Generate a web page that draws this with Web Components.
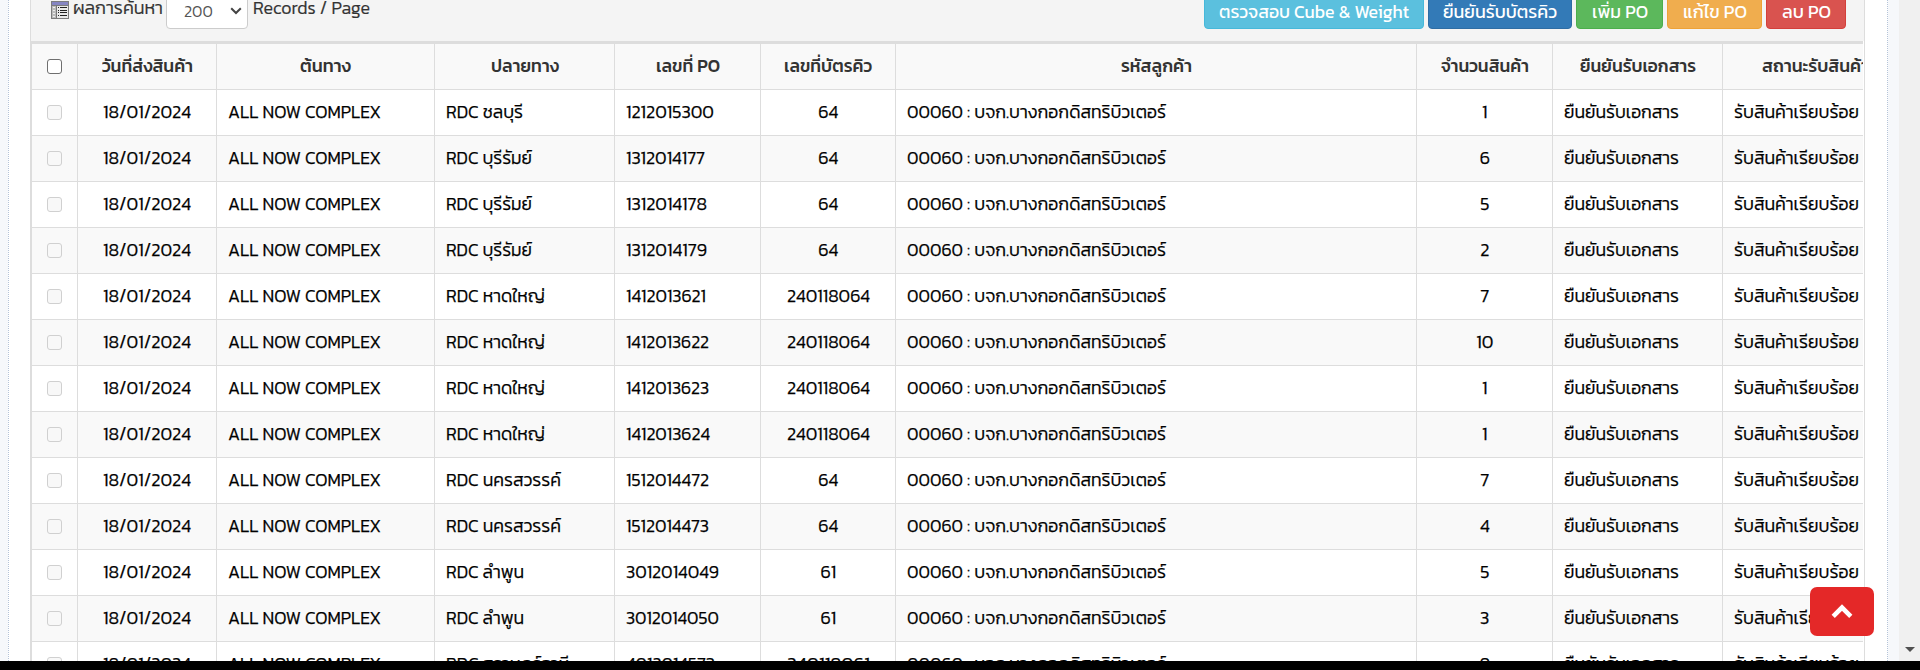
<!DOCTYPE html>
<html lang="th"><head><meta charset="utf-8"><title>PO</title>
<style>
html,body{margin:0;height:100%;overflow:hidden;background:#000}
body{font-family:Kanit,"Noto Sans Thai","Noto Sans",sans-serif;font-weight:300;color:#333}
</style></head><body>
<po-page></po-page>
<script>
const define=(name,html,init)=>{
  const t=document.createElement('template');t.innerHTML=html;
  customElements.define(name,class extends HTMLElement{
    connectedCallback(){
      if(this.shadowRoot)return;
      this.attachShadow({mode:'open'}).append(t.content.cloneNode(true));
      if(init)init(this,this.shadowRoot);
    }
  });
};

/* A single line of text, condensed or widened when a width is given. */
define('fit-text',`<style>
:host{display:inline-block;white-space:nowrap;text-align:left;line-height:24px;height:24px;vertical-align:top}
span{display:inline-block;transform-origin:0 50%;line-height:24px;height:24px}
</style><span><slot></slot></span>`,(el,r)=>{
  const w=+el.getAttribute('w'),s=r.querySelector('span');
  if(!w)return;
  const n=s.getBoundingClientRect().width;
  el.style.width=w+'px';
  if(n)s.style.transform='scaleX('+(w/n)+')';
});

define('check-box',`<style>
:host{display:block;box-sizing:border-box;width:15px;height:15px;border:1px solid #6f6f6f;border-radius:3px;background:#fff}
:host([disabled]){border-color:#d0d0d0;background:#f8f8f8}
</style>`);

define('tool-button',`<style>
:host{display:flex;box-sizing:border-box;height:38px;border:1px solid var(--edge);background:var(--fill);border-radius:4px;color:#fff;justify-content:center;font-size:18px;font-weight:400;padding-top:8px}
</style><slot></slot>`);

define('list-icon',`<style>:host{display:block;width:18px;height:18px}svg{display:block}</style>
<svg width="18" height="18" viewBox="0 0 18 18" shape-rendering="crispEdges">
<path fill="#7c7c7c" d="M0 0h18v18H0z"/><path fill="#e9e9e9" d="M1 5h16v12H1z"/>
<path fill="#8585c2" d="M1 1h16v3H1z"/><path fill="#bbb" d="M1 5h4v12H1z"/><path fill="#777" d="M5 4h1v13H5z"/>
<path fill="#eee" d="M2 6h2v1H2zM2 9h2v1H2zM2 12h2v1H2zM2 15h2v1H2z"/>
<path fill="#222" d="M7 6h1v1H7zM9 6h7v1H9zM7 9h1v1H7zM9 9h7v1H9zM7 11h1v1H7zM9 11h7v1H9zM7 14h1v1H7zM9 14h7v1H9z"/></svg>`);

define('page-size',`<style>
:host{display:flex;box-sizing:border-box;width:82px;height:38px;border:1px solid #ccc;border-radius:4px;background:#fff;color:#555;font-size:16px;padding:7px 5px 0 17px;justify-content:space-between}
svg{display:block;margin-top:8px}
</style><fit-text>200</fit-text><svg width="12" height="8" viewBox="0 0 12 8"><path d="M1.2 1.2 6 6l4.800-4.800" fill="none" stroke="#444" stroke-width="2"/></svg>`);

define('result-bar',`<style>
:host{display:flex;height:41px;background:#f4f4f4;box-sizing:border-box;font-size:18px;overflow:hidden;-webkit-text-stroke:.2px}
.l{display:flex;margin-left:20px}
.l list-icon{margin:1px 4px 0 0}.l fit-text{margin-top:-4px}
page-size{margin:-9px 5px 0 3px;-webkit-text-stroke:0}
.r{display:flex;gap:4px;margin:-9px 18px 0 auto;-webkit-text-stroke:0}
</style><div class="l"><list-icon></list-icon><fit-text w="90">ผลการค้นหา</fit-text><page-size></page-size><fit-text w="117">Records / Page</fit-text></div>
<div class="r">
<tool-button style="width:220px;--fill:#5bc0de;--edge:#46b8da"><fit-text w="190">ตรวจสอบ Cube &amp; Weight</fit-text></tool-button>
<tool-button style="width:144px;--fill:#337ab7;--edge:#2e6da4"><fit-text w="114">ยืนยันรับบัตรคิว</fit-text></tool-button>
<tool-button style="width:87px;--fill:#5cb85c;--edge:#4cae4c"><fit-text w="56">เพิ่ม PO</fit-text></tool-button>
<tool-button style="width:95px;--fill:#f0ad4e;--edge:#eea236"><fit-text w="64">แก้ไข PO</fit-text></tool-button>
<tool-button style="width:80px;--fill:#d9534f;--edge:#d43f3a"><fit-text w="49">ลบ PO</fit-text></tool-button></div>`);

define('table-row',`<style>
:host{display:grid;grid-template-columns:46px 139px 218px 180px 146px 135px 521px 136px 170px 185px;height:46px;box-sizing:border-box;border-bottom:1px solid #ddd;background:var(--row,#fff);color:#000;font-size:18px;-webkit-text-stroke:.25px}
:host([head]){color:#333;font-weight:500;background:#f9f9f9;-webkit-text-stroke:0}
::slotted(*){box-sizing:border-box;border-right:1px solid #ddd;padding:10px 10px 0 10.5px;min-width:0}
::slotted(.c){display:flex;justify-content:center}
::slotted(.k){padding:15px 0 0 15px}
</style><slot></slot>`);

define('po-table',`<style>
:host{display:block;width:1832px;overflow:hidden;border:solid #ddd;border-width:3px 0 0 1px;background:#fff;box-sizing:border-box}
.w{width:1876px}
</style><div class="w"></div>`,(el,r)=>{
  const f=(t,w,c='')=>`<div class="${c}"><fit-text ${w?`w="${w+1}"`:''}>${t}</fit-text></div>`;
  const heads=[['วันที่ส่งสินค้า',90],['ต้นทาง',50],['ปลายทาง',67],['เลขที่ PO',63],['เลขที่บัตรคิว',87],['รหัสลูกค้า',70],['จำนวนสินค้า',87],['ยืนยันรับเอกสาร',115],['สถานะรับสินค้า',106]];
  const rows=[['ชลบุรี',76,'1212015300',87,'64','1'],['บุรีรัมย์',85,'1312014177',78,'64','6'],['บุรีรัมย์',85,'1312014178',80,'64','5'],['บุรีรัมย์',85,'1312014179',80,'64','2'],
  ['หาดใหญ่',98,'1412013621',79,'240118064','7'],['หาดใหญ่',98,'1412013622',82,'240118064','10'],['หาดใหญ่',98,'1412013623',82,'240118064','1'],['หาดใหญ่',98,'1412013624',83,'240118064','1'],
  ['นครสวรรค์',114,'1512014472',82,'64','7'],['นครสวรรค์',114,'1512014473',82,'64','4'],['ลำพูน',77,'3012014049',92,'61','5'],['ลำพูน',77,'3012014050',92,'61','3'],['สุราษฎร์ธานี',122,'4012014573',88,'240118061','9']];
  r.querySelector('.w').innerHTML='<table-row head><div class="k"><check-box></check-box></div>'+heads.map(h=>f(...h,'c')).join('')+'</table-row>'+
  rows.map((d,i)=>`<table-row style="--row:${i%2?'#f9f9f9':'#fff'}"><div class="k"><check-box disabled></check-box></div>`+
   f('18/01/2024',87,'c')+f('ALL NOW COMPLEX',152)+f('RDC '+d[0],d[1])+f(d[2],d[3])+f(d[4],d[4].length>2?82:0,'c')+
   f('00060 : บจก.บางกอกดิสทริบิวเตอร์',258)+f(d[5],0,'c')+f('ยืนยันรับเอกสาร',114)+f('รับสินค้าเรียบร้อย',124)+'</table-row>').join('');
});

define('scroll-rail',`<style>
:host{display:flex;flex-direction:column;justify-content:flex-end;align-items:center;width:21px;background:#f0f0f0;box-sizing:border-box;padding-bottom:9px}
i{border:5px solid transparent;border-top-color:#505050;border-bottom:0}
</style><i></i>`);

define('to-top',`<style>
:host{position:absolute;left:1810px;top:587px;width:64px;height:49px;border-radius:7px;background:#e42828;display:flex;align-items:center;justify-content:center}
</style><svg width="22" height="15" viewBox="0 0 22 15"><path d="M2.200 12.300 11 3.600l8.800 8.700" fill="none" stroke="#fff" stroke-width="4.600"/></svg>`);

define('po-page',`<style>
:host{display:flex;position:relative;width:1920px;height:661px;overflow:hidden;background:#f6f8fb}
main{flex:1;margin:0 11px 0 8px;box-sizing:border-box;border:dotted #b4c3d8;border-width:0 1px;background:#fff;padding:0 22px 0 21px}
section{box-sizing:border-box;border:solid #ddd;border-width:0 1px;width:1835px;height:661px;overflow:hidden}
</style><main><section><result-bar></result-bar><po-table></po-table></section></main><scroll-rail></scroll-rail><to-top></to-top>`);
</script></body></html>
